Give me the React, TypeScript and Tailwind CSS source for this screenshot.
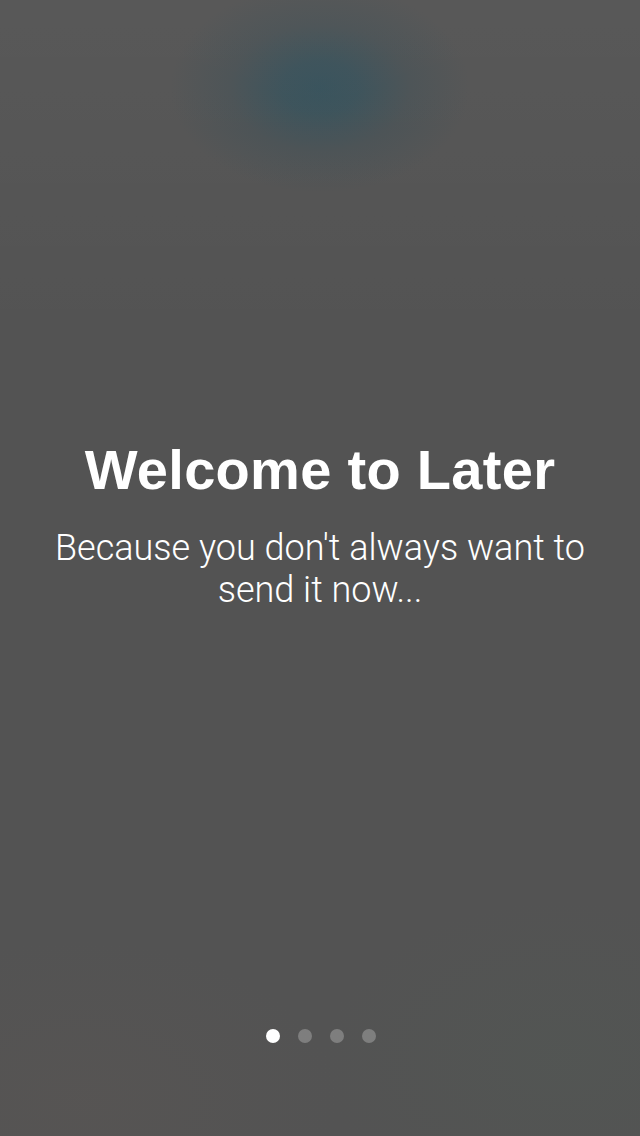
export default function App() {
  return (
    <div className="relative w-[640px] h-[1136px] overflow-hidden bg-[#535353] flex flex-col items-center">
      <div className="absolute inset-0 bg-[radial-gradient(ellipse_150px_105px_at_320px_88px,rgba(52,80,90,0.95),rgba(52,80,90,0.8)_25%,rgba(60,78,85,0.4)_60%,rgba(83,83,83,0)_100%)]" />
      <div className="absolute inset-0 bg-[radial-gradient(ellipse_260px_160px_at_80px_1100px,rgba(100,90,85,0.2),rgba(83,83,83,0)_100%)]" />
      <div className="absolute inset-0 bg-[radial-gradient(ellipse_240px_160px_at_560px_1060px,rgba(80,95,85,0.2),rgba(83,83,83,0)_100%)]" />
      <div className="absolute inset-0 bg-[linear-gradient(180deg,rgba(255,255,255,0.03),rgba(255,255,255,0)_30%)]" />
      <div className="relative flex flex-col items-center pt-[436px] font-['Liberation_Sans',Arial,sans-serif] text-white text-center">
        <h1 className="text-[56px] leading-[68px] font-bold tracking-[0.3px]">Welcome to Later</h1>
        <p className="mt-[23px] text-[36px] leading-[42px] font-light font-['Roboto',sans-serif] w-[620px]">
          Because you don't always want to
          <br />
          send it now...
        </p>
      </div>
      <div className="relative mt-auto mb-[93px] ml-[2px] flex gap-[18px]">
        <span className="w-[14px] h-[14px] rounded-full bg-white" />
        <span className="w-[14px] h-[14px] rounded-full bg-white/25" />
        <span className="w-[14px] h-[14px] rounded-full bg-white/25" />
        <span className="w-[14px] h-[14px] rounded-full bg-white/25" />
      </div>
    </div>
  );
}
